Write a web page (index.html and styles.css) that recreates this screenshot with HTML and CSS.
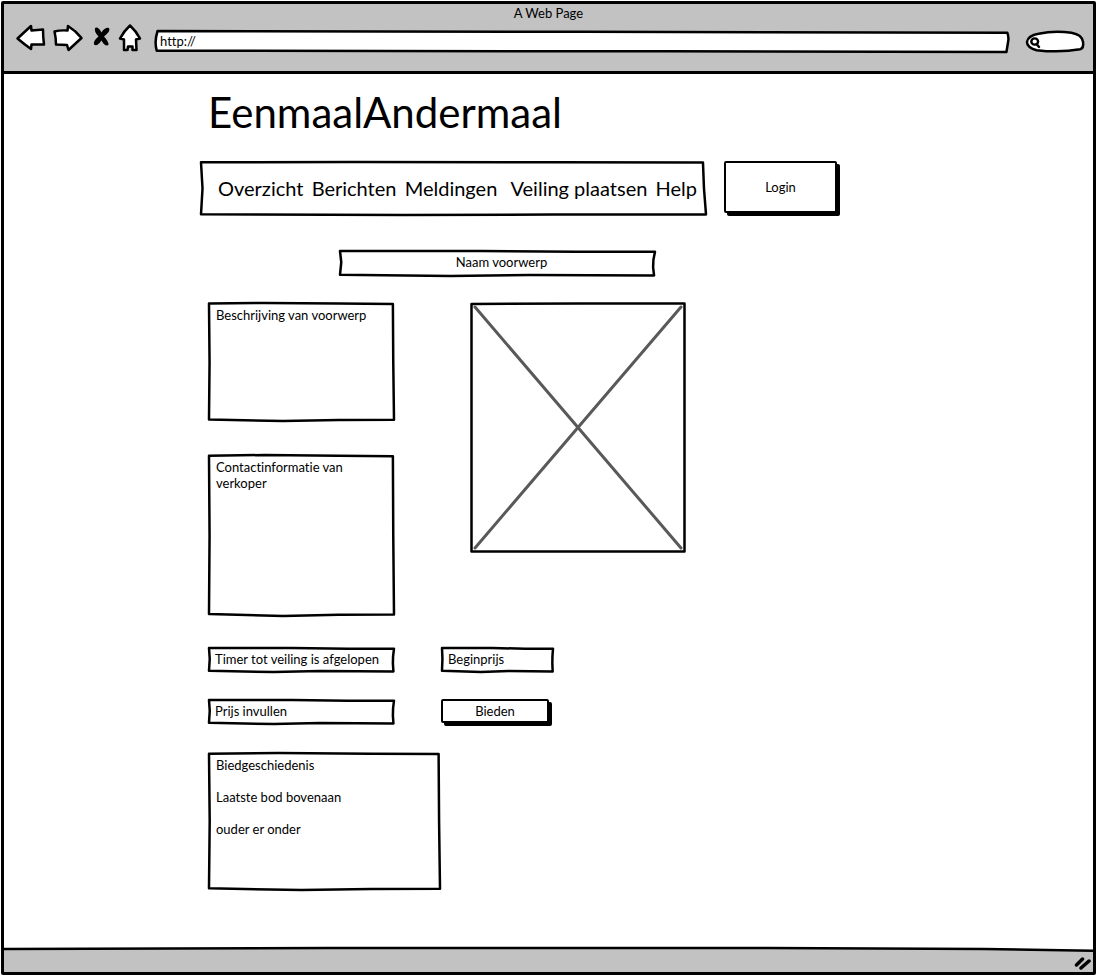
FILE: index.html
```html
<!DOCTYPE html>
<html lang="nl">
<head>
<meta charset="utf-8">
<meta name="viewport" content="width=device-width, initial-scale=1">
<title>A Web Page</title>
<link rel="stylesheet" href="styles.css">
</head>
<body>
<svg class="defs" aria-hidden="true">
  <symbol id="frame" viewBox="0 0 100 100" preserveAspectRatio="none">
    <path class="stroke" d="M0 .5 L30 0 L70 .5 L99.400 .8 L99.600 50 L100 99 L70 99.200 L40 100 L0 98.800 L.3 50Z"/>
  </symbol>
  <symbol id="slim" viewBox="0 0 100 100" preserveAspectRatio="none">
    <path class="stroke" d="M0 0 L45 0 L75 3 L100 3 L99.500 35 L99.400 65 L99.700 98 L60 96 L35 100 L0 95 L.4 45Z"/>
  </symbol>
</svg>
<div class="window">
  <header class="toolbar">
    <p class="title">A Web Page</p>
    <div class="controls">
      <button class="tool arrow" type="button" aria-label="Vorige"><svg viewBox="14 22 31 30"><path class="icon" d="M16.500 37.500 30 25 30.500 29.500Q36 29 42 28.500Q42 36 43 43.500L30.500 43.500 30 48Q23 43 16.500 37.500Z"/></svg></button>
      <button class="tool arrow" type="button" aria-label="Volgende"><svg viewBox="52 22 31 30"><path class="icon" d="M53.500 30.500Q59 29 66.500 29.500L67 25Q75 30 80.500 37L67.500 49 66 44 55 43.500Q55 37 53.500 30.500Z"/></svg></button>
      <button class="tool stop" type="button" aria-label="Stoppen"><svg viewBox="91 22 20 30"><path d="M95 27Q98 25 101.500 31.500Q105 26 109 27Q111 30 104 35.500Q109 41 108.500 44Q105 46 101.500 39.500Q97 46 94 43.500Q93 40 98.500 35.500Q94 31 95 27Z"/></svg></button>
      <button class="tool home" type="button" aria-label="Startpagina"><svg viewBox="118 22 24 30"><path class="icon" d="M130 24.500Q136 30 140 37.500L136 38.500 136.500 49 132.500 49 132.500 45.500 128 45.500 127.500 49 124 49 124 38.500 120 37.500Q124 30 130 24.500Z"/></svg></button>
      <div class="address">
        <svg class="outline" viewBox="0 0 100 100" preserveAspectRatio="none" aria-hidden="true"><path class="stroke filled" d="M.3 0 L50 4 L99.800 8Q100 30 99.900 50L99.700 100 L60 97 L.2 94Q-.1 50 .3 0Z"/></svg>
        <input class="field" type="text" value="http://" aria-label="Adres">
      </div>
      <div class="search">
        <svg class="outline" viewBox="0 0 60 23" preserveAspectRatio="none" aria-hidden="true"><path class="stroke filled" d="M13 3Q30-1 47 2Q58 4 59 12Q60 19 56 20Q35 24 11 21Q1 18 1 12Q2 5 13 3Z"/><circle class="lens" cx="9" cy="11.500" r="3.500"/><path class="lens" d="M11.500 15 13.500 17.500"/></svg>
        <input class="field" type="search" aria-label="Zoeken">
      </div>
    </div>
  </header>

  <main class="page">
    <h1>EenmaalAndermaal</h1>
    <div class="menu">
      <nav class="nav box"><svg class="outline"><use href="#frame"/></svg>
        <a href="#">Overzicht</a> <a href="#">Berichten</a> <a href="#">Meldingen</a> <a class="place" href="#">Veiling plaatsen</a> <a href="#">Help</a>
      </nav>
      <button class="button login" type="button">Login</button>
    </div>
    <h2 class="item-name box"><svg class="outline"><use href="#slim"/></svg>Naam voorwerp</h2>
    <div class="item">
      <div class="details">
        <section class="panel description box"><svg class="outline"><use href="#frame"/></svg><p>Beschrijving van voorwerp</p></section>
        <section class="panel contact box"><svg class="outline"><use href="#frame"/></svg><p>Contactinformatie van verkoper</p></section>
      </div>
      <svg class="photo" viewBox="0 0 216 251" role="img" aria-label="Afbeelding">
        <path class="cross" d="M5 5 211 246M211 5 5 246"/>
        <path class="icon clear" d="M1.500 2 110 1.500 214.500 1.500V249.500H1.500Z"/>
      </svg>
    </div>
    <div class="bidding">
      <p class="cell box"><svg class="outline"><use href="#slim"/></svg>Timer tot veiling is afgelopen</p>
      <p class="cell box"><svg class="outline"><use href="#slim"/></svg>Beginprijs</p>
      <div class="cell box"><svg class="outline"><use href="#slim"/></svg><input class="field" type="text" placeholder="Prijs invullen" aria-label="Prijs invullen"></div>
      <button class="button bid" type="button">Bieden</button>
    </div>
    <section class="panel history box"><svg class="outline"><use href="#frame"/></svg>
      <p>Biedgeschiedenis</p><p>Laatste bod bovenaan</p><p>ouder er onder</p>
    </section>
  </main>

  <footer class="status">
    <svg class="edge" viewBox="0 0 100 26" preserveAspectRatio="none" aria-hidden="true"><path class="bar" d="M0 1 L30 0 L70 0 L90 1 L100 3V26H0Z"/><path class="stroke" d="M0 1 L30 0 L70 0 L90 1 L100 3"/></svg>
    <svg class="grip" viewBox="0 0 18 14" aria-hidden="true"><path d="M3.500 9 9.500 3M8 12 16 5"/></svg>
  </footer>
</div>
</body>
</html>
```
FILE: styles.css
```css
* { box-sizing: border-box; }
body {
  margin: 0;
  background: #fff;
  color: #000;
  font: 13px/16px Lato, "Open Sans", sans-serif;
  font-variant-ligatures: none;
}
h1, h2, p { margin: 0; font-weight: 400; }
a { color: inherit; text-decoration: none; }
button, input { font: inherit; color: inherit; }
.defs { position: absolute; width: 0; height: 0; }

.window {
  display: flex;
  flex-direction: column;
  min-height: calc(100vh - 2px);
  margin: 1px;
  border: 3px solid #000;
  border-radius: 2px;
}

/* hand-drawn outlines */
.box { position: relative; }
.outline {
  position: absolute;
  inset: 1px;
  width: calc(100% - 2px);
  height: calc(100% - 2px);
  overflow: visible;
  pointer-events: none;
}
#frame, #slim { overflow: visible; }
.stroke {
  fill: none;
  stroke: #000;
  stroke-width: 2.5px;
  stroke-linejoin: round;
  vector-effect: non-scaling-stroke;
}
.filled { fill: #fff; }
.icon {
  fill: #fff;
  stroke: #000;
  stroke-width: 2.5px;
  stroke-linejoin: round;
}
.clear { fill: none; }
.lens { fill: none; stroke: #000; stroke-width: 2.5px; stroke-linecap: round; }

.toolbar {
  height: 70px;
  background: #c2c2c2;
  border-bottom: 3px solid #000;
}
.title { padding-top: 1px; text-align: center; }
.controls {
  display: flex;
  align-items: center;
  padding: 2px 8px 0 11px;
}
.tool {
  flex: none;
  height: 30px;
  margin-right: 7px;
  padding: 0;
  border: 0;
  background: none;
}
.tool svg { display: block; width: 100%; height: 100%; }
.arrow { width: 31px; }
.stop { width: 20px; }
.home { width: 24px; margin-right: 12px; }
.address, .search { position: relative; height: 23px; margin-top: 7px; }
.address { flex: 1; margin-right: 15px; }
.search { width: 60px; }
.field {
  position: relative;
  display: block;
  width: 100%;
  padding: 0;
  border: 0;
  outline: 0;
  background: none;
}
.field::placeholder { color: #000; opacity: 1; }
.address .field { height: 21px; padding-left: 6px; }
.search .field { height: 23px; padding-left: 20px; }

.page { flex: 1; padding: 14px 16px 56px 196px; }
h1 {
  padding-left: 8px;
  font-size: 42px;
  line-height: 48px;
}
.menu {
  display: flex;
  gap: 17px;
  margin-top: 25px;
}
.nav {
  display: flex;
  align-items: center;
  justify-content: space-between;
  width: 507px;
  height: 55px;
  padding: 0 10px 2px 18px;
  font-size: 20px;
  white-space: nowrap;
}
.place { margin-left: 5px; }
.button {
  padding: 0;
  border: 3px solid #000;
  border-radius: 2px;
  background: #fff;
  box-shadow: 3px 3px 0 #000;
}
.login { width: 113px; height: 52px; border-width: 2px; }
.item-name {
  width: 317px;
  height: 27px;
  margin: 34px 0 0 139px;
  padding-left: 8px;
  font-size: 13px;
  line-height: 24px;
  text-align: center;
}
.item {
  display: flex;
  align-items: flex-start;
  gap: 75px;
  margin: 25px 0 0 8px;
}
.details { display: grid; gap: 32px; width: 187px; }
.panel { padding: 5px 8px; }
.description { height: 120px; }
.contact { height: 163px; }
.photo { display: block; width: 216px; height: 251px; }
.cross { fill: none; stroke: #595959; stroke-width: 3px; stroke-linecap: round; }
.bidding {
  display: grid;
  grid-template-columns: 187px 113px;
  gap: 26px 46px;
  margin: 30px 0 0 8px;
}
.cell { height: 26px; padding: 0 7px; line-height: 24px; white-space: nowrap; }
.cell .field { height: 24px; }
.bid { width: 108px; height: 24px; border-width: 2px; line-height: 20px; }
.history {
  display: grid;
  align-content: start;
  gap: 16px;
  width: 233px;
  height: 139px;
  margin: 27px 0 0 8px;
}

.status { position: relative; height: 24px; }
.edge { display: block; width: 100%; height: 100%; overflow: visible; }
.bar { fill: #c2c2c2; }
.grip {
  position: absolute;
  right: 2px;
  bottom: 2px;
  width: 18px;
  height: 14px;
  fill: none;
  stroke: #000;
  stroke-width: 3.5px;
  stroke-linecap: round;
}
```
